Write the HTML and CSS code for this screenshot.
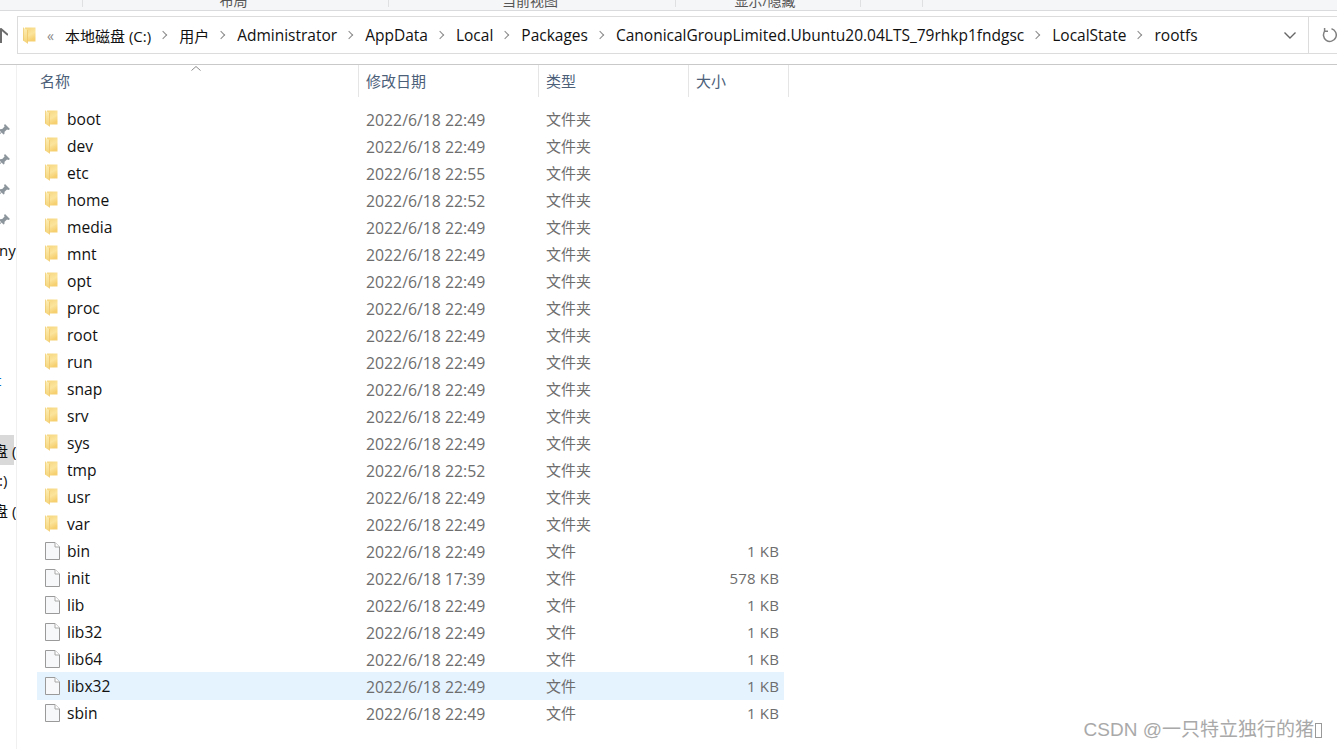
FILE: index.html
```html
<!DOCTYPE html>
<html lang="zh-CN">
<head>
<meta charset="utf-8">
<title>rootfs</title>
<link rel="stylesheet" href="styles.css">
</head>
<body>
<svg class="defs" width="0" height="0" aria-hidden="true">
  <defs>
    <linearGradient id="fg" x1="0" y1="0" x2="0.4" y2="1">
      <stop offset="0" stop-color="#f6d67e"/>
      <stop offset="0.6" stop-color="#fbe49c"/>
      <stop offset="1" stop-color="#f6d070"/>
    </linearGradient>
    <linearGradient id="ff" x1="0" y1="0" x2="0" y2="1">
      <stop offset="0" stop-color="#fdeeb6"/>
      <stop offset="1" stop-color="#f5d478"/>
    </linearGradient>
    <symbol id="folder" viewBox="0 0 13 17">
      <path d="M2 0.5 H12.5 V14.5 H2 Z" fill="url(#fg)"/>
      <path d="M0 0.5 L4.5 3 V16.5 L0 13.5 Z" fill="url(#ff)"/>
      <path d="M4.5 3 V16.5" fill="none" stroke="#eec365" stroke-width="0.7"/>
      <path d="M0.3 0.5 V13.5" fill="none" stroke="#e8bd5e" stroke-width="0.6"/>
    </symbol>
    <symbol id="file" viewBox="0 0 15 18">
      <path d="M0.5 0.5 H10 L14.5 5 V17.5 H0.5 Z" fill="#f7f8f9" stroke="#9a9a9a"/>
      <path d="M10 0.5 V5 H14.5" fill="#fff" stroke="#a8a8a8"/>
    </symbol>
    <symbol id="pin" viewBox="0 0 12 12">
      <path d="M7 0 L12 5 L10.5 6 L9 5.4 L6.6 7.8 L6.4 10 L5.4 10.6 L3.6 8.6 L0.6 11.6 L0 11 L3 8 L1.2 6.2 L2 5.2 L4.2 5 L6.6 2.6 L6 1.2 Z" fill="#8d959c"/>
    </symbol>
  </defs>
</svg>

<header class="ribbon">
  <div class="tab tab-a"></div>
  <div class="tab tab-b"><span>布局</span></div>
  <div class="tab tab-c"><span>当前视图</span></div>
  <div class="tab tab-d"><span>显示/隐藏</span></div>
  <div class="tab tab-e"></div>
</header>

<nav class="navbar">
  <svg class="up" width="8" height="16" viewBox="0 0 8 16"><path d="M-6 7 L1 1 L8 7 M1 1 V15" fill="none" stroke="#6d6d6d" stroke-width="2"/></svg>
  <div class="address">
    <div class="crumbs">
      <svg class="addr-folder" width="13" height="17"><use href="#folder"/></svg>
      <span class="more">«</span>
      <span class="cjk">本地磁盘 (C:)</span><i class="chev"></i>
      <span class="cjk">用户</span><i class="chev"></i>
      <span>Administrator</span><i class="chev"></i>
      <span>AppData</span><i class="chev"></i>
      <span>Local</span><i class="chev"></i>
      <span>Packages</span><i class="chev"></i>
      <span>CanonicalGroupLimited.Ubuntu20.04LTS_79rhkp1fndgsc</span><i class="chev"></i>
      <span>LocalState</span><i class="chev"></i>
      <span>rootfs</span>
    </div>
    <svg class="dropdown" width="12" height="7" viewBox="0 0 12 7"><path d="M0.5 0.5 L6 6 L11.5 0.5" fill="none" stroke="#666" stroke-width="1.4"/></svg>
    <div class="refresh">
      <svg width="16" height="16" viewBox="0 0 16 16"><path d="M9.5 1.8 A6.4 6.4 0 1 1 3.2 3.6 M2.6 1 V4.2 H6" fill="none" stroke="#808080" stroke-width="1.5"/></svg>
    </div>
  </div>
</nav>

<div class="main">
  <aside class="side">
    <div class="side-row"><svg width="12" height="12"><use href="#pin"/></svg></div>
    <div class="side-row"><svg width="12" height="12"><use href="#pin"/></svg></div>
    <div class="side-row"><svg width="12" height="12"><use href="#pin"/></svg></div>
    <div class="side-row"><svg width="12" height="12"><use href="#pin"/></svg></div>
    <div class="side-row"><span class="clip">ny</span></div>
    <div class="side-row side-tick"><span class="clip tick">t</span></div>
    <div class="side-row side-active"><span class="clip clip-disk">盘 (</span></div>
    <div class="side-row"><span class="clip">:)</span></div>
    <div class="side-row"><span class="clip clip-disk">盘 (</span></div>
  </aside>

  <section class="files">
    <div class="head">
      <div class="col col-name">名称<svg class="sort" width="10" height="5" viewBox="0 0 10 5"><path d="M0.5 4.5 L5 0.5 L9.5 4.5" fill="none" stroke="#8a8a8a"/></svg></div>
      <div class="col col-date">修改日期</div>
      <div class="col col-type">类型</div>
      <div class="col col-size">大小</div>
    </div>
    <div class="list">
      <div class="row"><svg class="ico" width="13" height="17"><use href="#folder"/></svg><span class="name">boot</span><span class="date">2022/6/18 22:49</span><span>文件夹</span><span></span></div>
      <div class="row"><svg class="ico" width="13" height="17"><use href="#folder"/></svg><span class="name">dev</span><span class="date">2022/6/18 22:49</span><span>文件夹</span><span></span></div>
      <div class="row"><svg class="ico" width="13" height="17"><use href="#folder"/></svg><span class="name">etc</span><span class="date">2022/6/18 22:55</span><span>文件夹</span><span></span></div>
      <div class="row"><svg class="ico" width="13" height="17"><use href="#folder"/></svg><span class="name">home</span><span class="date">2022/6/18 22:52</span><span>文件夹</span><span></span></div>
      <div class="row"><svg class="ico" width="13" height="17"><use href="#folder"/></svg><span class="name">media</span><span class="date">2022/6/18 22:49</span><span>文件夹</span><span></span></div>
      <div class="row"><svg class="ico" width="13" height="17"><use href="#folder"/></svg><span class="name">mnt</span><span class="date">2022/6/18 22:49</span><span>文件夹</span><span></span></div>
      <div class="row"><svg class="ico" width="13" height="17"><use href="#folder"/></svg><span class="name">opt</span><span class="date">2022/6/18 22:49</span><span>文件夹</span><span></span></div>
      <div class="row"><svg class="ico" width="13" height="17"><use href="#folder"/></svg><span class="name">proc</span><span class="date">2022/6/18 22:49</span><span>文件夹</span><span></span></div>
      <div class="row"><svg class="ico" width="13" height="17"><use href="#folder"/></svg><span class="name">root</span><span class="date">2022/6/18 22:49</span><span>文件夹</span><span></span></div>
      <div class="row"><svg class="ico" width="13" height="17"><use href="#folder"/></svg><span class="name">run</span><span class="date">2022/6/18 22:49</span><span>文件夹</span><span></span></div>
      <div class="row"><svg class="ico" width="13" height="17"><use href="#folder"/></svg><span class="name">snap</span><span class="date">2022/6/18 22:49</span><span>文件夹</span><span></span></div>
      <div class="row"><svg class="ico" width="13" height="17"><use href="#folder"/></svg><span class="name">srv</span><span class="date">2022/6/18 22:49</span><span>文件夹</span><span></span></div>
      <div class="row"><svg class="ico" width="13" height="17"><use href="#folder"/></svg><span class="name">sys</span><span class="date">2022/6/18 22:49</span><span>文件夹</span><span></span></div>
      <div class="row"><svg class="ico" width="13" height="17"><use href="#folder"/></svg><span class="name">tmp</span><span class="date">2022/6/18 22:52</span><span>文件夹</span><span></span></div>
      <div class="row"><svg class="ico" width="13" height="17"><use href="#folder"/></svg><span class="name">usr</span><span class="date">2022/6/18 22:49</span><span>文件夹</span><span></span></div>
      <div class="row"><svg class="ico" width="13" height="17"><use href="#folder"/></svg><span class="name">var</span><span class="date">2022/6/18 22:49</span><span>文件夹</span><span></span></div>
      <div class="row"><svg class="ico" width="15" height="18"><use href="#file"/></svg><span class="name">bin</span><span class="date">2022/6/18 22:49</span><span>文件</span><span class="size">1 KB</span></div>
      <div class="row"><svg class="ico" width="15" height="18"><use href="#file"/></svg><span class="name">init</span><span class="date">2022/6/18 17:39</span><span>文件</span><span class="size">578 KB</span></div>
      <div class="row"><svg class="ico" width="15" height="18"><use href="#file"/></svg><span class="name">lib</span><span class="date">2022/6/18 22:49</span><span>文件</span><span class="size">1 KB</span></div>
      <div class="row"><svg class="ico" width="15" height="18"><use href="#file"/></svg><span class="name">lib32</span><span class="date">2022/6/18 22:49</span><span>文件</span><span class="size">1 KB</span></div>
      <div class="row"><svg class="ico" width="15" height="18"><use href="#file"/></svg><span class="name">lib64</span><span class="date">2022/6/18 22:49</span><span>文件</span><span class="size">1 KB</span></div>
      <div class="row row-hover"><svg class="ico" width="15" height="18"><use href="#file"/></svg><span class="name">libx32</span><span class="date">2022/6/18 22:49</span><span>文件</span><span class="size">1 KB</span></div>
      <div class="row"><svg class="ico" width="15" height="18"><use href="#file"/></svg><span class="name">sbin</span><span class="date">2022/6/18 22:49</span><span>文件</span><span class="size">1 KB</span></div>
    </div>
  </section>
</div>

<div class="watermark">CSDN @一只特立独行的猪<i class="tofu"></i></div>
</body>
</html>
```
FILE: styles.css
```css
* { box-sizing: border-box; }
html, body { margin: 0; padding: 0; }
body {
  width: 1337px;
  height: 749px;
  overflow: hidden;
  background: #fff;
  color: #111;
  font-family: "Open Sans", "Noto Sans CJK SC", sans-serif;
  font-size: 15px;
  position: relative;
}
.defs { position: absolute; }

/* ribbon */
.ribbon {
  height: 11px;
  display: flex;
  background: #f5f6f7;
  border-bottom: 1px solid #dadbdc;
  overflow: hidden;
}
.tab {
  height: 7px;
  border-right: 1px solid #dfe0e1;
  display: flex;
  justify-content: center;
  align-items: flex-end;
  font-size: 14px;
  color: #555;
  line-height: 13px;
}
.tab-a { width: 83px; }
.tab-b { width: 306px; padding-right: 4px; }
.tab-c { width: 287px; padding-right: 4px; }
.tab-d { width: 185px; padding-right: 6px; }
.tab-e { width: 62px; }

/* navigation */
.navbar {
  height: 54px;
  display: flex;
  align-items: flex-start;
  padding-top: 5px;
  border-bottom: 1px solid #c9c9c9;
}
.up { margin: 12px 9px 0 0; flex: none; }
.address {
  flex: none;
  width: 1320px;
  height: 38px;
  border: 1px solid #dcdcdc;
  border-right: 0;
  display: flex;
  align-items: center;
}
.crumbs { flex: none; width: 1258px; display: flex; align-items: center; padding-left: 5px; white-space: nowrap; font-size: 15.5px; }
.cjk { font-size: 15px; }
.addr-folder { margin-right: 11px; flex: none; }
.more { width: 18px; color: #888; font-size: 14px; }
.chev {
  flex: none;
  width: 6px;
  height: 6px;
  margin: 0 13px 0 9px;
  border-top: 1.5px solid #8a8a8a;
  border-right: 1.5px solid #8a8a8a;
  transform: rotate(45deg);
}
.dropdown { flex: none; margin-left: 8px; }
.refresh {
  flex: none;
  margin-left: 12px;
  height: 36px;
  padding-left: 13px;
  border-left: 1px solid #dcdcdc;
  display: flex;
  align-items: center;
}

/* main */
.main { display: flex; height: 684px; }
.side {
  flex: none;
  width: 17px;
  border-right: 1px solid #f0f0f0;
  padding-top: 50px;
  overflow: hidden;
}
.side-row {
  height: 30px;
  width: 16px;
  display: flex;
  align-items: center;
  white-space: nowrap;
  overflow: hidden;
}
.side-row svg { margin-left: -2px; flex: none; }
.clip { margin-left: -1px; font-size: 15px; color: #111; }
.clip-disk { margin-left: -7px; }
.side-tick { margin-top: 100px; margin-bottom: 40px; }
.tick { color: #0a6cc4; margin-left: -4px; }
.side-active { background: #d9d9d9; width: 14px; overflow: visible; }

/* file table */
.files { flex: 1; }
.head { display: flex; height: 32px; color: #4c607a; font-size: 15px; line-height: 32px; }
.col { border-right: 1px solid #e5e5e5; position: relative; padding-left: 7px; }
.col-name { width: 342px; padding-left: 23px; }
.col-date { width: 180px; }
.col-type { width: 150px; }
.col-size { width: 100px; }
.sort { position: absolute; left: 174px; top: 1px; }
.list { padding: 8px 0 0 20px; }
.row {
  width: 747px;
  height: 27px;
  display: grid;
  grid-template-columns: 22px 299px 180px 100px 1fr;
  align-items: center;
  padding: 0 5px 0 8px;
  color: #6d6d6d;
  font-size: 15px;
}
.ico { display: block; }
.name { color: #111; font-size: 15.6px; }
.date { font-size: 15.8px; padding-top: 2px; }
.size { text-align: right; font-size: 15px; letter-spacing: 0.15px; }
.row-hover { background: #e5f3ff; box-shadow: 0 1px 0 #e5f3ff; }

/* watermark */
.watermark {
  position: absolute;
  right: 15px;
  bottom: 7px;
  font-family: "Liberation Sans", "Noto Sans CJK SC", sans-serif;
  font-size: 19px;
  line-height: 24px;
  color: #a9a9a9;
  display: flex;
  align-items: center;
}
.tofu { width: 7px; height: 15px; border: 1px solid #999; margin-left: 1px; }
```
